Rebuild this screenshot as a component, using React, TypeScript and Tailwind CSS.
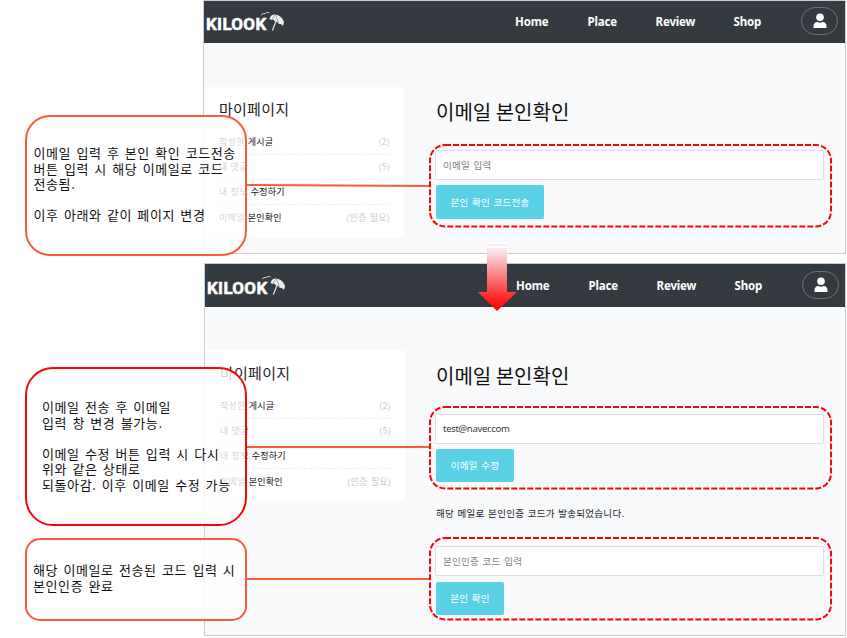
import React from "react";

const menu = [
  { label: "작성한 게시글", count: "(2)" },
  { label: "내 댓글", count: "(5)" },
  { label: "내 정보 수정하기", count: "" },
  { label: "이메일 본인확인", count: "(인증 필요)" },
];

function Logo() {
  return (
    <div className="flex h-6 items-start">
      <span className="w-[62px] pt-[4px] font-['Roboto',sans-serif] text-[17px] leading-[20px] font-bold tracking-[0.3px] text-white [-webkit-text-stroke:0.5px_white]">KILOOK</span>
      <svg className="-ml-[9px]" width="28" height="24" viewBox="0 0 28 24" fill="none">
        <path d="M2 5 Q4 3 6 3.6 Q8 1.6 10.5 2.8" stroke="#c9cccf" strokeWidth="1" />
        <path d="M10.5 9.5 Q11 4.5 16 4.5 Q22.5 5 25 12 L24 16 Q21.5 13.2 19.8 14 Q18.5 10.8 16 11.6 Q14 8.6 12.5 10 Q11.4 9 10.5 9.5Z" fill="#eceded" />
        <path d="M16 5 L13 9.5 M16.5 5 L19.5 13" stroke="#70757a" strokeWidth=".6" />
        <path d="M17.3 10.5 L13.4 20.5" stroke="#e5e6e7" strokeWidth="1.2" />
      </svg>
    </div>
  );
}

function Header({ tall }: { tall?: boolean }) {
  return (
    <header className={"flex shrink-0 items-center bg-[#343a40] pl-[2px] text-white " + (tall ? "h-[43px]" : "h-[42px]")}>
      <div className="w-[309px]"><Logo /></div>
      <nav className="flex font-['Noto_Sans',sans-serif] text-[11.5px] leading-4 font-bold tracking-[-0.15px]">
        <span className="w-[72.5px]">Home</span>
        <span className="w-[68px]">Place</span>
        <span className="w-[78px]">Review</span>
        <span className="w-[67.5px]">Shop</span>
      </nav>
      <div className="-mt-[2px] flex h-[28px] w-[37px] items-center justify-center rounded-full border border-[#6c7278]">
        <svg width="14" height="16" viewBox="0 0 14 16" fill="white">
          <circle cx="7" cy="4.3" r="3.8" />
          <path d="M.5 15 V13.5 Q.5 9 4.5 9 Q7 10.4 9.5 9 Q13.5 9 13.5 13.5 V15Z" />
        </svg>
      </div>
    </header>
  );
}

function Sidebar({ pad }: { pad: string }) {
  return (
    <aside className={"h-[151px] w-[200px] shrink-0 bg-white pr-[14px] pl-[15px] " + pad}>
      <h2 className="mb-[9px] text-[15px] leading-[24px] tracking-[0.25px] text-[#212529]">마이페이지</h2>
      {menu.map((m, i) => (
        <div
          key={m.label}
          className={
            "flex h-[25px] items-center justify-between text-[9px] tracking-[0.25px] [word-spacing:0.8px] " +
            (i < 3 ? "border-b border-dashed border-[#ededed]" : "")
          }
        >
          <span className="text-[#111]">{m.label}</span>
          <span className="text-[#c9cbcd]">{m.count}</span>
        </div>
      ))}
    </aside>
  );
}

const small = "text-[9.5px] tracking-[0.28px] [word-spacing:1.1px] ";

function Field({ children, dark }: { children: React.ReactNode; dark?: boolean }) {
  return (
    <div className={small + "flex h-[30px] w-[389px] items-center rounded-[2px] border border-[#dadee2] bg-white pl-[7px] " + (dark ? "text-[#343a40]" : "text-[#7b828a]")}>
      {children}
    </div>
  );
}

function Button({ children, size }: { children: React.ReactNode; size: string }) {
  return <button className={small + "block rounded-[2px] bg-[#5bd1e7] text-white " + size}>{children}</button>;
}

function Callout({ box, lines }: { box: string; lines: string[] }) {
  return (
    <div className={"absolute left-[25px] w-[222px] border-2 bg-white/80 text-[13px] leading-[15.6px] tracking-[0.6px] [word-spacing:1.8px] whitespace-pre text-[#111] " + box}>
      {lines.map((l, i) => <p key={i} className="h-[15.6px]">{l}</p>)}
    </div>
  );
}

function Highlight({ place }: { place: string }) {
  return (
    <svg className={"absolute left-[429px] " + place} width="404" height="84" fill="none">
      <rect x="1" y="1" width="401" height="81.5" rx="15" stroke="#fa0505" strokeWidth="2" strokeDasharray="6 2" />
    </svg>
  );
}

export default function App() {
  return (
    <main className="relative h-[638px] w-[847px] overflow-hidden bg-white font-['Noto_Sans_CJK_KR',sans-serif]">
      <section className="ml-[203px] flex h-[254px] w-[643px] flex-col border border-[#c9cbcd] bg-[#f8f9fb]">
        <Header />
        <div className="flex pt-[44px]">
          <Sidebar pad="pt-[10px]" />
          <div className="pt-[10px] pl-[31px]">
            <h1 className="mb-[23px] pl-px text-[20px] leading-[30px] text-[#111]">이메일 본인확인</h1>
            <Field>이메일 입력</Field>
            <div className="pt-[5px] pl-px"><Button size="h-[34px] w-[108px]">본인 확인 코드전송</Button></div>
          </div>
        </div>
      </section>

      <section className="mt-[9px] ml-[204px] flex h-[373px] w-[642px] flex-col border border-[#c9cbcd] bg-[#f8f9fb]">
        <Header tall />
        <div className="flex pt-[43px]">
          <Sidebar pad="pt-[11px]" />
          <div className="pt-[11px] pl-[30px]">
            <h1 className="mb-[23px] pl-px text-[20px] leading-[30px] text-[#111]">이메일 본인확인</h1>
            <Field dark><span className="font-['Noto_Sans',sans-serif] text-[9.5px] tracking-[-0.3px]">test@naver.com</span></Field>
            <div className="pt-[5px] pl-px"><Button size="h-[33px] w-[78px]">이메일 수정</Button></div>
            <p className={small + "h-[64px] pt-[23px] pl-px leading-[16px] text-[#212529]"}>해당 메일로 본인인증 코드가 발송되었습니다.</p>
            <Field>본인인증 코드 입력</Field>
            <div className="pt-[6px] pl-px"><Button size="h-[33px] w-[68px]">본인 확인</Button></div>
          </div>
        </div>
      </section>

      <svg className="absolute top-0 left-0" width="847" height="638">
        <defs>
          <linearGradient id="arrow" x1="0" y1="0" x2="0" y2="1">
            <stop offset="0" stopColor="#f6eff3" />
            <stop offset=".12" stopColor="#f9e6e8" />
            <stop offset=".85" stopColor="#ff1c1c" />
            <stop offset="1" stopColor="#ff0000" />
          </linearGradient>
        </defs>
        <path d="M246 185 L430 186 M246 447 H430 M246 579 H430" stroke="#fa5b3c" strokeWidth="2" />
        <path d="M487 242H507V292H517L497 311L478 292H487Z" fill="url(#arrow)" />
        <path d="M487 243H507M487 247H507" stroke="white" strokeWidth="2" />
      </svg>

      <Highlight place="top-[144px]" />
      <Highlight place="top-[406px]" />
      <Highlight place="top-[537px]" />

      <Callout
        box="top-[115px] h-[141px] rounded-[25px] border-[#fa5b3c] pl-[6.5px] pt-[28px]"
        lines={["이메일 입력 후 본인 확인 코드전송", "버튼 입력 시 해당 이메일로 코드", "전송됨.", "", "이후 아래와 같이 페이지 변경"]}
      />
      <Callout
        box="top-[367px] h-[159px] rounded-[28px] border-[#fa0505] pl-[15px] pt-[30px]"
        lines={["이메일 전송 후 이메일", "입력 창 변경 불가능.", "", "이메일 수정 버튼 입력 시 다시", "위와 같은 상태로", "되돌아감. 이후 이메일 수정 가능"]}
      />
      <Callout
        box="top-[538px] h-[83px] rounded-[15px] border-[#fa5b3c] pl-[6px] pt-[22px]"
        lines={["해당 이메일로 전송된 코드 입력 시", "본인인증 완료"]}
      />
    </main>
  );
}
